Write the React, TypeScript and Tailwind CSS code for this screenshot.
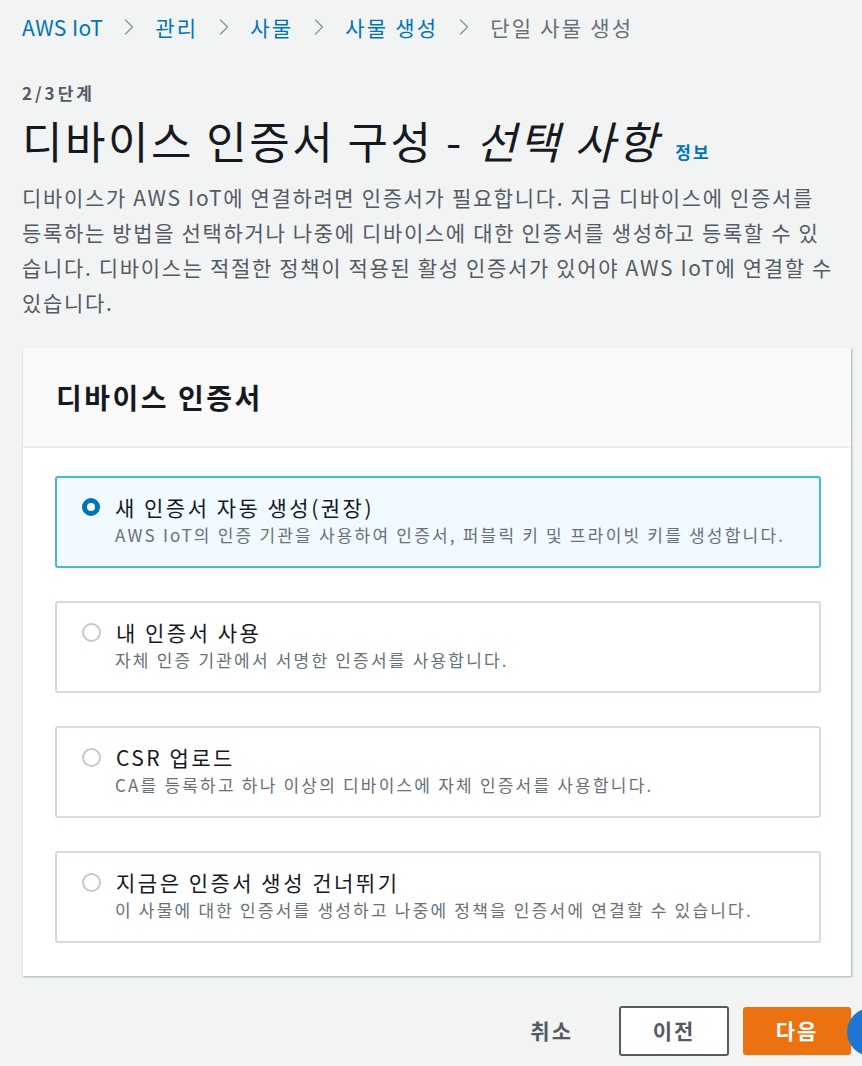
import { ChevronRight } from "lucide-react";

const FONT = "font-['Noto_Sans_CJK_KR','Noto_Sans',sans-serif]";

const CRUMBS = ["AWS IoT", "관리", "사물", "사물 생성"];

const OPTIONS = [
  {
    title: "새 인증서 자동 생성(권장)",
    desc: "AWS IoT의 인증 기관을 사용하여 인증서, 퍼블릭 키 및 프라이빗 키를 생성합니다.",
  },
  { title: "내 인증서 사용", desc: "자체 인증 기관에서 서명한 인증서를 사용합니다." },
  { title: "CSR 업로드", desc: "CA를 등록하고 하나 이상의 디바이스에 자체 인증서를 사용합니다." },
  {
    title: "지금은 인증서 생성 건너뛰기",
    desc: "이 사물에 대한 인증서를 생성하고 나중에 정책을 인증서에 연결할 수 있습니다.",
  },
];

function Radio({ checked }: { checked: boolean }) {
  return checked ? (
    <span className="block w-[18px] h-[18px] rounded-full border-[5px] border-[#0073bb] bg-white shrink-0" />
  ) : (
    <span className="block w-[19px] h-[19px] rounded-full border-2 border-[#c3cccc] bg-white shrink-0" />
  );
}

export default function App() {
  const selected = 0;

  return (
    <div className={`relative w-[862px] h-[1066px] overflow-hidden bg-[#f2f3f3] px-[22px] ${FONT}`}>
      {/* breadcrumb */}
      <nav className="flex items-center h-[28px] mt-[13px] text-[21px] leading-[28px] tracking-[2.2px]">
        {CRUMBS.map((c, i) => (
          <div key={c} className="flex items-center">
            <span className={i === 0 ? "text-[#0073bb] tracking-[0.4px]" : "text-[#0073bb]"}>{c}</span>
            <ChevronRight size={28} strokeWidth={1.1} className="mx-[12px] text-[#879596]" />
          </div>
        ))}
        <span className="text-[#687078]">단일 사물 생성</span>
      </nav>

      <div className="mt-[40px] text-[17px] leading-[24px] font-bold text-[#545b64] tracking-[3px]">2/3단계</div>

      <div className="flex items-baseline mt-[11px] h-[48px]">
        <h1 className="text-[44px] leading-[48px] text-[#16191f] font-normal tracking-[2.5px]">
          디바이스 인증서 구성 - <i>선택 사항</i>
        </h1>
        <span className="ml-[15px] text-[17px] font-bold text-[#0073bb] tracking-[2px]">정보</span>
      </div>

      <p className="mt-[16px] text-[21px] leading-[35px] text-[#545b64] tracking-[1.65px]">
        디바이스가 AWS IoT에 연결하려면 인증서가 필요합니다. 지금 디바이스에 인증서를 등록하는 방법을
        선택하거나 나중에 디바이스에 대한 인증서를 생성하고 등록할 수 있습니다. 디바이스는 적절한 정책이
        적용된 활성 인증서가 있어야 AWS IoT에 연결할 수 있습니다.
      </p>

      {/* panel */}
      <section className="mt-[28px] w-[829px] bg-white border-l border-[#e4e7e7] shadow-[1px_1px_2px_rgba(0,28,36,0.3)]">
        <header className="h-[100px] bg-[#fafafa] border-b-2 border-[#eaeded] flex items-center pl-[33px]">
          <h2 className="text-[28px] font-bold text-[#16191f] tracking-[2.5px]">디바이스 인증서</h2>
        </header>
        <div className="px-8 pt-[28px] pb-[33px] flex flex-col gap-[33px]">
          {OPTIONS.map((o, i) => (
            <div
              key={o.title}
              className={
                i === selected
                  ? "h-[92px] w-[766px] rounded-[3px] border-2 border-[#44b9d6] bg-[#f1faff] pl-[25px] pt-[15px]"
                  : "h-[92px] w-[766px] rounded-[3px] border-2 border-[#d5dbdb] bg-white pl-[25px] pt-[15px]"
              }
            >
              <div className="flex items-center gap-[15px] h-[28px]">
                <Radio checked={i === selected} />
                <span className="text-[21px] leading-[28px] text-[#16191f] tracking-[2.5px]">{o.title}</span>
              </div>
              <div className="ml-[33px] mt-[2px] text-[17px] leading-[24px] text-[#687078] tracking-[2.2px]">
                {o.desc}
              </div>
            </div>
          ))}
        </div>
      </section>

      {/* actions */}
      <div className="flex items-center justify-end mt-[30px] mr-[-11px]">
        <button className="h-[50px] text-[21px] font-bold text-[#545b64] tracking-[2px]">취소</button>
        <button className="ml-[46px] h-[50px] w-[110px] rounded-[3px] border-2 border-[#545b64] bg-white text-[21px] font-bold text-[#545b64] tracking-[2px]">
          이전
        </button>
        <button className="ml-[14px] h-[48px] w-[108px] rounded-[3px] bg-[#ec7211] text-[21px] font-bold text-white tracking-[2px]">
          다음
        </button>
      </div>

      {/* floating help bubble */}
      <div className="absolute left-[847px] top-[1008px] w-[48px] h-[48px] rounded-full bg-[#1f76d2]" />
    </div>
  );
}
